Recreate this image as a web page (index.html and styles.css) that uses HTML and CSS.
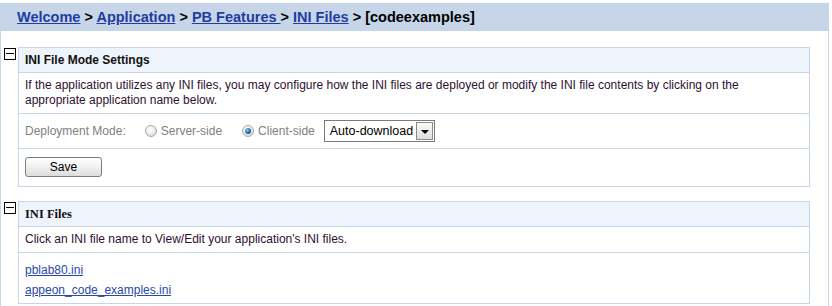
FILE: index.html
```html
<!DOCTYPE html>
<html lang="en">
<head>
    <meta charset="UTF-8">
    <title>INI Files</title>
    <link rel="stylesheet" href="styles.css">
</head>
<body>
<div class="page">
    <div class="crumbs">
        <a href="#">Welcome</a> &gt; <a href="#">Application</a> &gt; <a href="#">PB Features </a>&gt; <a href="#">INI Files</a> &gt; [codeexamples]
    </div>

    <div class="section first">
        <span class="toggle"></span>
        <div class="panel">
            <div class="panel-title">INI File Mode Settings</div>
            <div class="row desc">If the application utilizes any INI files, you may configure how the INI files are deployed or modify the INI file contents by clicking on the appropriate application name below.</div>
            <div class="row mode">
                <span class="label">Deployment Mode:</span>
                <span class="radio"></span><span class="opt">Server-side</span>
                <span class="radio on"></span><span class="opt last">Client-side</span>
                <span class="select">Auto-download<span class="arrow"></span></span>
            </div>
            <div class="row save">
                <button class="btn">Save</button>
            </div>
        </div>
    </div>

    <div class="section">
        <span class="toggle"></span>
        <div class="panel">
            <div class="panel-title serif">INI Files</div>
            <div class="row desc2">Click an INI file name to View/Edit your application's INI files.</div>
            <div class="row files">
                <a href="#">pblab80.ini</a>
                <a href="#">appeon_code_examples.ini</a>
            </div>
        </div>
    </div>
</div>
</body>
</html>
```

FILE: styles.css
```css
*{
    margin: 0;
    padding: 0;
    box-sizing: border-box;
}
body{
    background: #fff;
    font-family: "Liberation Sans", Arial, sans-serif;
    font-size: 12px;
    color: #222;
}
.page{
    width: 829px;
    height: 306px;
    margin-top: 3px;
    border-left: 1px solid #c6d5e7;
    border-right: 1px solid #c6d5e7;
}
.crumbs{
    height: 28px;
    margin-left: -1px;
    margin-right: -1px;
    background: #c6d6e8;
    padding: 5px 0 0 17px;
    font-size: 14.5px;
    font-weight: bold;
    color: #000;
    line-height: 18px;
    white-space: nowrap;
}
.crumbs a{
    color: #1f3c9e;
}
.section{
    display: flex;
    align-items: flex-start;
    padding-left: 3px;
    margin-top: 14px;
}
.section.first{
    margin-top: 16px;
}
.toggle{
    width: 12px;
    height: 12px;
    margin-top: 1px;
    margin-right: 2px;
    border: 1px solid #000;
    position: relative;
    background: #fff;
}
.toggle:after{
    content: "";
    position: absolute;
    left: 1px;
    right: 1px;
    top: 4px;
    height: 1px;
    background: #000;
}
.panel{
    width: 792px;
    border: 1px solid #c6d5e7;
}
.panel-title{
    height: 25px;
    background: #eef4fc;
    border-bottom: 1px solid #c6d5e7;
    padding: 5px 0 0 6px;
    font-size: 12px;
    font-weight: bold;
    color: #111;
    line-height: 14px;
}
.panel-title.serif{
    font-family: "Liberation Serif", serif;
    font-size: 12.5px;
}
.row{
    border-bottom: 1px solid #c6d5e7;
    padding-left: 6px;
}
.row:last-child{
    border-bottom: none;
}
.desc{
    height: 41px;
    padding-top: 5px;
    padding-right: 40px;
    line-height: 15px;
    color: #301030;
}
.mode{
    height: 35px;
    display: flex;
    align-items: center;
    color: #808080;
    white-space: nowrap;
}
.label{
    margin-right: 19px;
}
.radio{
    flex: none;
    width: 12px;
    height: 12px;
    border-radius: 50%;
    border: 1px solid #a8a8a8;
    background: radial-gradient(circle at 40% 35%, #fff 0, #f0f0f0 40%, #cfcfcf 100%);
    margin-right: 4px;
    position: relative;
}
.radio.on:after{
    content: "";
    position: absolute;
    left: 2px;
    top: 2px;
    width: 6px;
    height: 6px;
    border-radius: 50%;
    background: radial-gradient(circle at 35% 35%, #8fd0f0 0, #1a5fa0 60%, #0d3a70 100%);
}
.opt{
    margin-right: 20px;
}
.opt.last{
    margin-right: 9px;
}
.select{
    flex: none;
    width: 111px;
    height: 22px;
    border: 1px solid #7a7a7a;
    display: flex;
    align-items: center;
    justify-content: space-between;
    padding-left: 5px;
    padding-right: 1px;
    font-size: 12.5px;
    color: #000;
    background: #fff;
}
.arrow{
    width: 17px;
    height: 18px;
    border: 1px solid #8a8a8a;
    background: linear-gradient(#fafafa, #dcdcdc);
    position: relative;
}
.arrow:after{
    content: "";
    position: absolute;
    left: 4px;
    top: 7px;
    border-left: 4px solid transparent;
    border-right: 4px solid transparent;
    border-top: 4px solid #000;
}
.save{
    height: 37px;
    padding-top: 8px;
}
.btn{
    width: 77px;
    height: 20px;
    border: 1px solid #7d7d7d;
    border-radius: 3px;
    background: linear-gradient(#ffffff, #f2f2f2 45%, #dcdcdc);
    font-family: "Liberation Sans", Arial, sans-serif;
    font-size: 12px;
    color: #000;
}
.desc2{
    height: 26px;
    padding-top: 5px;
    line-height: 15px;
    color: #301030;
}
.files{
    height: 50px;
    padding-top: 7px;
    display: flex;
    flex-direction: column;
    line-height: 20px;
}
.files a{
    color: #2a48a8;
    align-self: flex-start;
}
```
